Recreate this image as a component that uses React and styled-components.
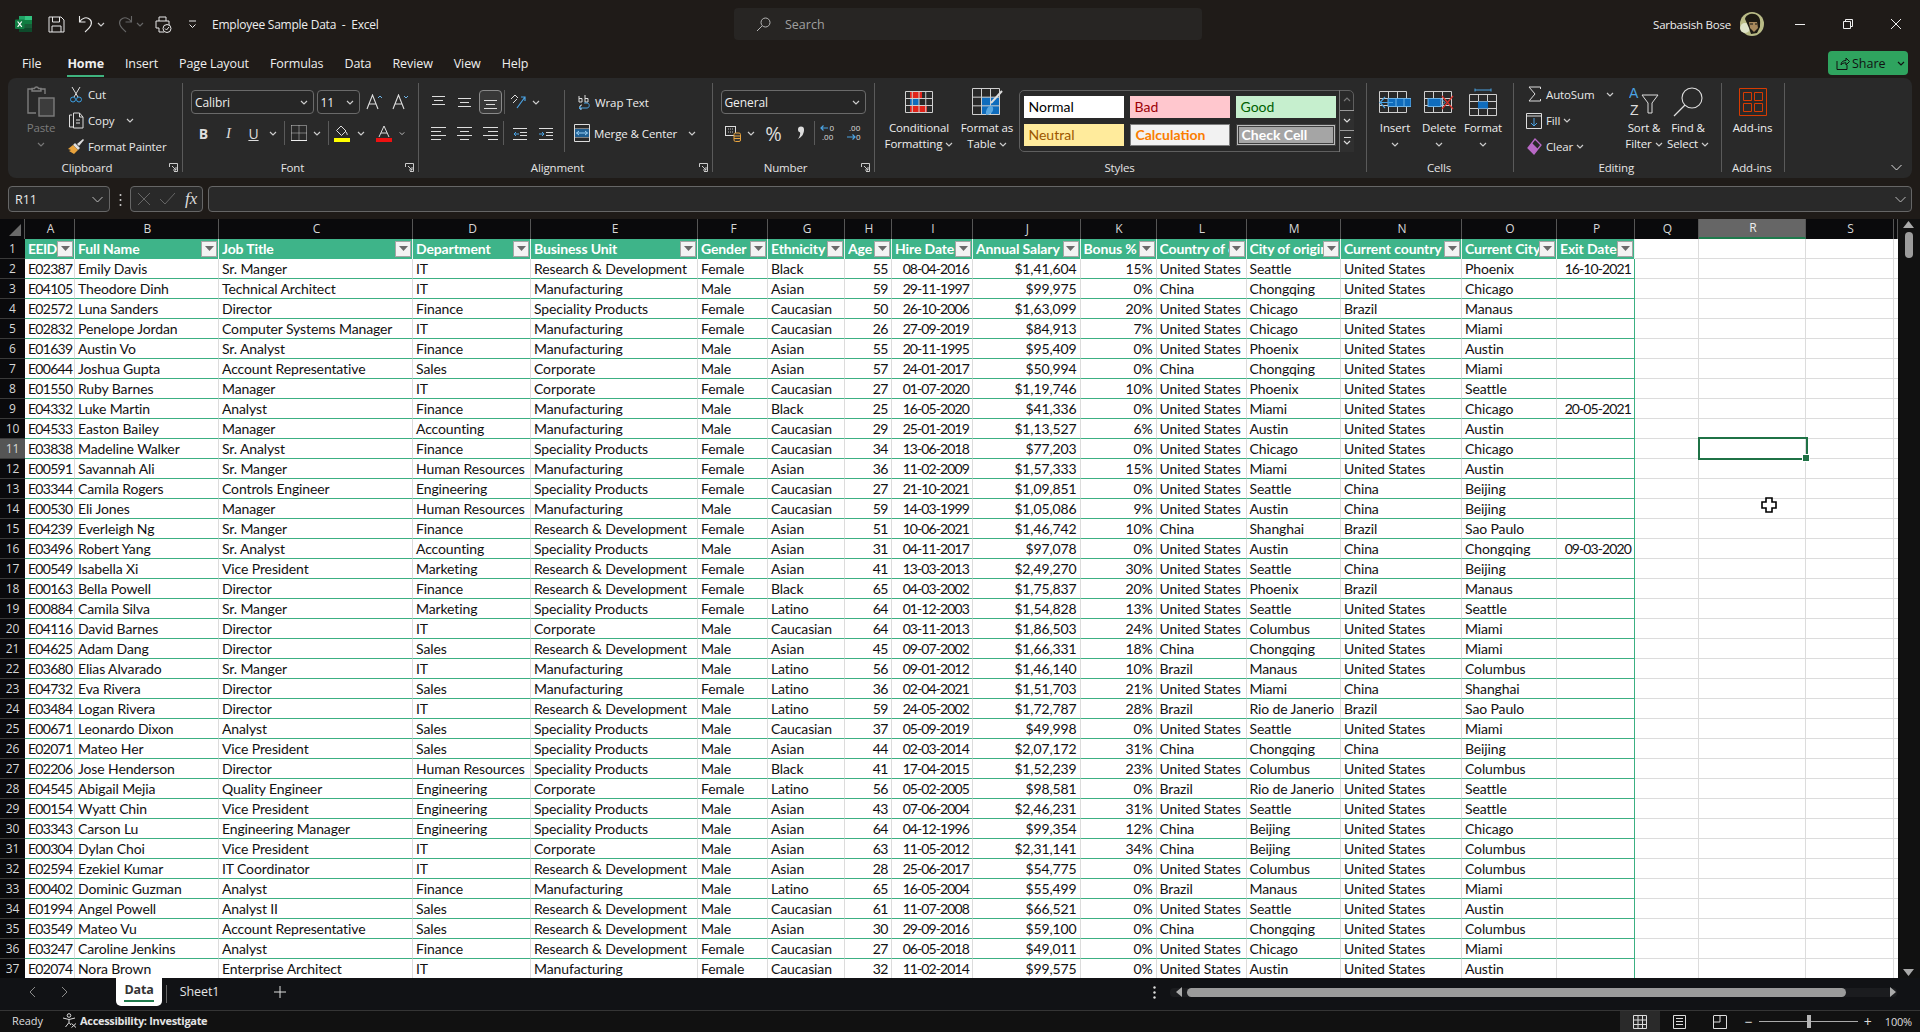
import React from "react";
import styled, { createGlobalStyle } from "styled-components";

const Global = createGlobalStyle`
  html, body { margin: 0; padding: 0; background: #1f1b18; }
  * { box-sizing: border-box; }
  #root { width: 1920px; height: 1032px; overflow: hidden; }
`;

const UI = `"Open Sans", "Noto Sans", sans-serif`;
const CELL = `Lato, "Liberation Sans", sans-serif`;

const Page = styled.div`
  width: 1920px; height: 1032px; display: flex; flex-direction: column;
  background: #1f1b18; color: #e8e8e8; font-family: ${UI}; overflow: hidden;
`;

/* Title bar */
const TitleBar = styled.div`display: flex; align-items: center; height: 48px; padding-left: 15px; flex: none;`;
const Quick = styled.div`width: ${p => p.$w}px; display: flex; align-items: center; flex: none;`;
const TitleText = styled.div`width: 522px; flex: none; font-size: 12px; letter-spacing: -0.24px; white-space: pre; color: #eee;`;
const SearchBox = styled.div`
  width: 468px; height: 32px; flex: none; background: #272523; border-radius: 4px;
  display: flex; align-items: center; gap: 14px; padding-left: 22px; color: #a0a0a0; font-size: 12.5px;
`;
const TitleRight = styled.div`margin-left: auto; display: flex; align-items: center;`;
const UserName = styled.div`font-size: 11.5px; letter-spacing: -0.22px; color: #eee; margin-right: 9px;`;
const WinBtn = styled.div`width: 48px; height: 48px; display: flex; align-items: center; justify-content: center;`;
const AvatarWrap = styled.div`width: 24px; height: 24px; margin-right: 12px; display: flex;`;

/* Menu */
const MenuBar = styled.div`display: flex; align-items: center; height: 30px; padding: 0 12px 0 22px; gap: 21px; flex: none;`;
const MenuItem = styled.div`
  position: relative; top: 1px; font-size: 12.5px; color: #eee; font-weight: ${p => (p.$active ? 700 : 400)};
  letter-spacing: -0.1px; line-height: 24px; margin-right: ${p => p.$mr || 0}px;
  ${p => p.$active && `&::after { content:""; position:absolute; left:0; right:0; bottom:-1px; height:2px; background:#3fb37f; }`}
`;
const ShareBtn = styled.div`
  margin-left: auto; width: 80px; height: 24px; background: #2fa45f; border-radius: 4px;
  display: flex; align-items: center; padding-left: 8px; gap: 2px; font-size: 12.5px; color: #111;
`;

/* Ribbon */
const Ribbon = styled.div`
  flex: none; height: 100px; margin: 0 8px; background: #292929; border-radius: 8px;
  display: flex; align-items: flex-start; padding-top: 5px;
`;
const Group = styled.div`
  width: ${p => p.$w}px; height: 89px; flex: none; display: flex; flex-direction: column;
  border-right: 1px solid #5a5a5a;
`;
const Body = styled.div`flex: 1; min-height: 0; display: flex; padding-left: ${p => p.$pl || 0}px; padding-top: ${p => p.$pt || 0}px;`;
const Foot = styled.div`height: 12px; display: flex; align-items: center; padding-right: 2px; margin-bottom: 0;`;
const GroupLabel = styled.div`flex: 1; text-align: center; font-size: 11.5px; letter-spacing: -0.15px; line-height: 16px; height: 16px; position: relative; top: 2px; color: #e4e4e4;`;
const Launcher = styled.div`width: 14px; height: 16px; display: flex; align-items: center; justify-content: center; position: relative; top: 1px;`;
const Stack = styled.div`display: flex; flex-direction: column; width: ${p => (p.$w ? p.$w + "px" : "auto")}; flex: none; margin-top: ${p => p.$mt || 0}px;`;
const SmallRow = styled.div`display: flex; align-items: center; height: 26px; font-size: 11.5px; letter-spacing: -0.12px; white-space: nowrap; padding-left: ${p => p.$pl || 0}px;`;
const IconSlot = styled.div`width: ${p => p.$w}px; margin-right: ${p => p.$mr || 0}px; flex: none; display: flex; justify-content: center; align-items: center;`;
const ChevSlot = styled.div`margin-left: ${p => p.$ml || 5}px; display: flex;`;
const LargeBtn = styled.div`width: ${p => p.$w}px; flex: none; display: flex; flex-direction: column; align-items: center; font-size: 11.5px; letter-spacing: -0.12px; color: ${p => p.$dim ? "#7c7c7c" : "#eee"};`;
const LargeIcon = styled.div`height: 37px; display: flex; align-items: center; justify-content: center;`;
const LargeLine = styled.div`height: 16px; line-height: 16px; display: flex; align-items: center; gap: 3px; white-space: nowrap;`;
const ToolRows = styled.div`display: flex; flex-direction: column; gap: 7px; flex: none;`;
const ToolRow = styled.div`display: flex; align-items: center; height: 24px;`;
const Select = styled.div`
  width: ${p => p.$w}px; height: 24px; flex: none; border: 1px solid #6a6a6a; border-radius: 4px;
  background: #262626; display: flex; align-items: center; justify-content: space-between;
  padding: 0 5px 0 3px; font-size: 12px; letter-spacing: -0.1px; color: #eee; margin-left: ${p => p.$ml || 0}px;
`;
const Tool = styled.div`
  width: ${p => p.$w}px; height: 24px; flex: none; display: flex; align-items: center; justify-content: center;
  margin-left: ${p => p.$ml || 0}px; border-radius: 4px; color: #ddd;
  font-size: ${p => p.$fs || 13}px; font-family: ${p => p.$serif ? `"Liberation Serif", serif` : "inherit"};
  font-weight: ${p => p.$bold ? 700 : 400}; font-style: ${p => p.$it ? "italic" : "normal"};
  text-decoration: ${p => p.$under ? "underline" : "none"};
  ${p => p.$sel && `border: 1px solid #8a8a8a; background: #383838;`}
`;
const RowSep = styled.div`width: 1px; height: 24px; background: #5a5a5a; flex: none; margin: 0 ${p => p.$mr || 0}px 0 ${p => p.$ml || 0}px;`;
const TallSep = styled.div`width: 1px; height: 62px; background: #5a5a5a; flex: none; margin-left: ${p => p.$ml || 0}px;`;
const TextTool = styled.div`display: flex; align-items: center; height: 24px; padding-left: ${p => p.$pl}px; font-size: 11.5px; letter-spacing: -0.1px; white-space: nowrap; color: #eee;`;
const StylesSlot = styled.div`padding-top: 7px;`;

const Gallery = styled.div`
  width: 335px; height: 62px; flex: none; border: 1px solid #5f5f5f; border-radius: 5px;
  display: flex; padding: 5px 0 0 3.5px; position: relative;
`;
const StyleGrid = styled.div`display: grid; grid-template-columns: repeat(3, 100px); grid-auto-rows: 22px; gap: 6px; flex: none;`;
const StyleCell = styled.div`
  display: flex; align-items: center; padding: 0 0 2px 5px; font-family: ${CELL}; font-size: 14px;
  background: ${p => p.$bg}; color: ${p => p.$fg}; font-weight: ${p => p.$bold ? 700 : 400};
  ${p => p.$focus && `outline: 3px solid #292929; box-shadow: 0 0 0 3px #929292;`}
  ${p => p.$box && `border: 1px solid #7f7f7f;`}
  ${p => p.$double && `border: 1px solid #3f3f3f; box-shadow: inset 0 0 0 1px #bbb, inset 0 0 0 2px #3f3f3f;`}
`;
const GalleryScroll = styled.div`
  width: 15px; flex: none; margin: -6px -1px -1px auto; display: flex; flex-direction: column;
  border-left: 1px solid #777;
`;
const GalleryBtn = styled.div`
  flex: 1; display: flex; flex-direction: column; gap: 2px; align-items: center; justify-content: center;
  border-bottom: 1px solid ${p => p.$last ? "transparent" : "#9a9a9a"}; background: ${p => p.$bright ? "#2f2f2f" : "transparent"};
`;
const GalleryBar = styled.div`width: 7px; height: 1px; background: #ddd;`;
const Collapse = styled.div`margin-left: auto; align-self: flex-end; padding: 0 10px 7px 0; display: flex;`;

/* Formula bar */
const FormulaBar = styled.div`flex: none; height: 26px; margin: 8px 8px 0; display: flex; align-items: stretch;`;
const NameBox = styled.div`
  width: 102px; flex: none; background: #292929; border: 1px solid #666; border-radius: 4px;
  display: flex; align-items: center; justify-content: space-between; padding: 0 6px 0 6px; font-size: 12.5px;
`;
const Dots = styled.div`width: 20px; flex: none; display: flex; align-items: center; justify-content: center;`;
const FxBox = styled.div`
  width: 73px; flex: none; background: #292929; border: 1px solid #666; border-radius: 4px;
  display: flex; align-items: center; gap: 10px; padding: 0 0 0 7px; color: #cfcfcf;
`;
const FxText = styled.span`font-family: "Liberation Serif", serif; font-style: italic; font-size: 17px; color: #ddd;`;
const FormulaInput = styled.div`
  flex: 1; margin-left: 5px; background: #292929; border: 1px solid #666; border-radius: 4px;
  display: flex; align-items: center; justify-content: flex-end; padding-right: 5px;
`;

/* Sheet */
const SheetArea = styled.div`flex: none; height: 759px; margin-top: 7px; display: flex; background: #0c0c0e;`;
const GridWrap = styled.div`width: 1898px; flex: none; position: relative; overflow: hidden;`;
const COLS = "25px 50px 144px 194px 118px 167px 70px 77px 47px 81px 107.5px 76px 90px 94.5px 121px 95px 78px 64px 107px 88px 4px";
const ColHeadRow = styled.div`display: grid; grid-template-columns: ${COLS}; height: 20px; background: #0a0a0c;`;
const Corner = styled.div`display: flex; align-items: flex-end; justify-content: flex-end; padding: 0 3px 3px 0; border-right: 1px solid #555;`;
const ColHead = styled.div`
  display: flex; align-items: center; justify-content: center; font-size: 12px; color: #d8d8d8; padding: 0 0 1px 2px;
  border-right: 1px solid #555; ${p => p.$sel && `background: #666; color: #eee; border-bottom: 2px solid #1f7a4c;`}
`;
const Row = styled.div`display: grid; grid-template-columns: ${COLS}; height: 20px; background: #fff;`;
const RowHead = styled.div`
  display: flex; align-items: center; justify-content: center; font-size: 12px; background: ${p => p.$sel ? "#555" : "#0a0a0c"};
  color: #d8d8d8; border-bottom: 1px solid #3a3a3a;
`;
const Cell = styled.div`
  font-family: ${CELL}; font-size: 14px; letter-spacing: ${p => p.$ls || -0.12}px; color: #111; line-height: 19px;
  padding: 0 3px; overflow: hidden; white-space: nowrap; text-align: ${p => p.$right ? "right" : "left"};
  border-right: 1px solid ${p => p.$edge ? "#3cb083" : "#dcdcdc"};
  border-bottom: 1px solid ${p => p.$table ? "#3cb083" : "#dcdcdc"};
`;
const HeadCell = styled.div`
  display: flex; align-items: center; background: #3eb489; color: #fff; font-family: ${CELL}; font-weight: 700;
  font-size: 14px; letter-spacing: ${p => p.$ls || -0.12}px; padding: 0 1px 1px 3px; overflow: hidden; border-right: 1px solid #e8f5ef;
`;
const HeadText = styled.div`flex: 1; min-width: 0; overflow: hidden; white-space: nowrap; padding-bottom: 1px;`;
const Filter = styled.div`
  width: 16px; height: 16px; flex: none; background: #f3f3f3; border: 1px solid #a5a5a5;
  display: flex; align-items: center; justify-content: center;
`;
const Selection = styled.div`
  position: absolute; left: 1698px; top: 218px; width: 110px; height: 23px; pointer-events: none;
  border: 2px solid #1f7246;
  &::after { content: ""; position: absolute; right: -4px; bottom: -4px; width: 6px; height: 6px; background: #1f7246; border: 1px solid #fff; }
`;
const CursorMark = styled.div`position: absolute; left: 1761px; top: 278px; display: flex;`;

const VScroll = styled.div`flex: 1; background: #111; display: flex; flex-direction: column; align-items: center; padding: 2px 1px 2px 0;`;
const VThumb = styled.div`width: 8px; height: 26px; margin-top: 4px; border-radius: 4px; background: #9c9c9c;`;
const VSpacer = styled.div`flex: 1;`;

/* Tabs */
const TabsBar = styled.div`flex: none; height: 32px; background: #111215; display: flex; align-items: flex-start; position: relative;`;
const Nav = styled.div`
  width: ${p => p.$w}px; flex: none; height: 28px; display: flex; align-items: center;
  justify-content: ${p => p.$start ? "flex-start" : "center"}; padding-left: ${p => p.$pl || 0}px;
`;
const ActiveTab = styled.div`
  width: 46px; height: 28px; flex: none; background: #fff; color: #333; font-family: ${UI}; font-weight: 700; font-size: 12.5px; letter-spacing: -0.2px;
  border-radius: 0 0 5px 5px; text-align: center; line-height: 24px; position: relative;
  &::after { content: ""; position: absolute; left: 8px; right: 8px; bottom: 4px; height: 2px; background: #1f7a4c; }
`;
const TabSep = styled.div`width: 1px; height: 18px; background: #666; flex: none; margin: 7px 0 0 ${p => p.$ml}px;`;
const SheetTab = styled.div`width: 65px; flex: none; height: 28px; line-height: 28px; text-align: center; font-size: 12.5px; letter-spacing: -0.1px; color: #e4e4e4;`;
const HScrollZone = styled.div`margin-left: auto; display: flex; align-items: center; height: 28px; padding-right: 23px;`;
const HTrack = styled.div`width: 727px; height: 9px; margin-left: 14px; background: #1b1c1f; border-radius: 4px; display: flex; align-items: center; justify-content: space-between; position: relative; padding: 0 1px 0 6px;`;
const HThumb = styled.div`width: 659px; height: 9px; border-radius: 5px; background: #9b9b9b; margin-left: 5px;`;
const HGrow = styled.div`flex: 1;`;

/* Status */
const StatusBar = styled.div`flex: none; height: 22px; background: #111; border-top: 1px solid #353535; display: flex; align-items: center; padding: 0 0 0 12px; font-size: 11px; color: #ddd;`;
const ReadyText = styled.div`width: 50px; flex: none; letter-spacing: -0.1px; padding-bottom: 2px;`;
const A11y = styled.div`display: flex; align-items: center; gap: 3px; font-weight: 700; letter-spacing: -0.3px; color: #e4e4e4; padding-bottom: 2px;`;
const StatusRight = styled.div`margin-left: auto; display: flex; align-items: center; height: 100%; padding-right: 8px;`;
const ViewBtn = styled.div`width: ${p => p.$w}px; height: 100%; flex: none; display: flex; align-items: center; justify-content: center; margin-right: ${p => p.$mr || 0}px; background: ${p => p.$on ? "#2a2a2a" : "transparent"};`;
const Slider = styled.div`width: 99px; height: 1px; background: #aaa; margin: 0 5px; position: relative; flex: none;`;
const SliderThumb = styled.div`position: absolute; left: 48px; top: -6px; width: 4px; height: 13px; background: #b5b5b5;`;
const ZoomSign = styled.div`width: 10px; text-align: center; font-size: 14px; color: #ddd;`;
const ZoomText = styled.div`margin-left: 12px; font-size: 11px; letter-spacing: -0.2px;`;

/* Icons */
const S = ({ w, h, children, ...r }) => <svg width={w} height={h} viewBox={`0 0 ${w} ${h}`} fill="none" stroke="#ddd" strokeWidth="1" {...r}>{children}</svg>;
const Chev = ({ c = "#ccc", up }) => <S w={8} h={5} stroke={c}><path d={up ? "M1 4l3-3 3 3" : "M1 1l3 3 3-3"} strokeWidth="1.2" /></S>;
const Launch = () => <S w={9} h={9} stroke="#ccc"><path d="M.5 4V.5H8.5V8.5H5M3 3l4 4M7 4v3H4" /></S>;
const ExcelLogo = () => (
  <svg width="17" height="16" viewBox="0 0 17 16">
    <rect x="4" width="13" height="4" fill="#21a366" /><rect x="4" y="4" width="13" height="4" fill="#107c41" />
    <rect x="4" y="8" width="13" height="4" fill="#185c37" /><rect x="4" y="12" width="13" height="4" fill="#0e4a2b" />
    <rect x="10" width="7" height="4" fill="#33c481" /><rect x="0" y="3.5" width="9.5" height="9.5" rx="1" fill="#107c41" />
    <path d="M2.6 5.5l4.2 5.4M6.8 5.5l-4.2 5.4" stroke="#fff" strokeWidth="1.2" />
  </svg>
);
const SaveIcon = () => <S w={17} h={17} stroke="#e8e8e8"><path d="M1 1h12l3 3v12H1zM4.5 1v5h7V1M4 16v-6h9v6" /></S>;
const UndoIcon = ({ c = "#e8e8e8" }) => <S w={16} h={18} stroke={c}><path d="M1.5 1v6h6M1.5 7C4 2.5 9 1.5 12 4.5c3 3 1.5 7-5 12.5" strokeWidth="1.1" /></S>;
const RedoIcon = ({ c = "#666" }) => <S w={16} h={18} stroke={c}><path d="M14.5 1v6h-6M14.5 7C12 2.5 7 1.5 4 4.5c-3 3-1.5 7 5 12.5" strokeWidth="1.1" /></S>;
const PrintIcon = () => <S w={17} h={17} stroke="#e8e8e8"><path d="M4 5V1h7v4M1 5h13v7H10M1 5v7h3M4 12v4h5" /><circle cx="12" cy="12.5" r="4" fill="#1f1b18" /><path d="M10 12.5l1.5 1.5 2.5-3" /></S>;
const CustomizeIcon = () => <S w={9} h={9} stroke="#e8e8e8"><path d="M1 1h7M1.5 4.5L4.5 7.5l3-3" /></S>;
const SearchIcon = () => <S w={15} h={15} stroke="#b5b5b5"><circle cx="9.5" cy="5.5" r="4.5" /><path d="M6 9l-5 5" /></S>;
const Avatar = () => (
  <svg width="24" height="24" viewBox="0 0 24 24">
    <circle cx="12" cy="12" r="12" fill="#b9bb86" /><circle cx="5" cy="16" r="5" fill="#dfe4c9" />
    <path d="M5 7c1-5 9-7 13-3 3 3 2 7 2 11l-3 6-6 1-2-6z" fill="#1d1a12" />
    <path d="M9 10l8 0 1 6-4 4-4-4z" fill="#a8895c" /><path d="M10 12h3M15 12h2" stroke="#111" />
  </svg>
);
const MinIcon = () => <S w={10} h={10} stroke="#eee"><path d="M0 5.5h10" /></S>;
const RestoreIcon = () => <S w={10} h={10} stroke="#eee"><path d="M.5 2.5h7v7h-7zM2.5 2.5V.5h7v7h-2" /></S>;
const CloseIcon = () => <S w={10} h={10} stroke="#eee"><path d="M0 0l10 10M10 0L0 10" /></S>;
const ShareIcon = () => <S w={14} h={14} stroke="#111"><path d="M1 5v8.5h10V9M5 9c0-3 2-4.5 5-4.5V2l3.5 3.5L10 9V6.8C7.5 6.8 6 7.5 5 9z" /></S>;
const PasteIcon = () => (
  <S w={28} h={31} stroke="#7d7d7d"><path d="M6 3H1v24h8M13 3h5v5M5 5V2.5h2.5C8 .5 11 .5 11.5 2.5H14V5z" strokeWidth="1.4" /><rect x="12" y="12" width="15" height="18" fill="#3c3c3c" strokeWidth="1.4" /></S>
);
const CutIcon = () => <S w={12} h={17} stroke="#ddd"><path d="M2 1l6 10M10 1L4 11" /><circle cx="3" cy="13.5" r="2.5" stroke="#3b9fe3" /><circle cx="9" cy="13.5" r="2.5" stroke="#3b9fe3" /></S>;
const CopyIcon = () => <S w={15} h={17} stroke="#ddd"><path d="M3 3H.5v12H4M4.5 1h6l3.5 4v11H4.5zM10.5 1v4H14M7 8h4M7 11h4" /></S>;
const PainterIcon = () => (
  <svg width="17" height="17" viewBox="0 0 17 17" fill="none"><path d="M9 6l2 2 5-6-1-1z" fill="#ddd" /><path d="M7 5l5 5-2 2-5-5z" fill="#ddd" /><path d="M5 7l5 5-4 4-5-3 2-1-3-1z" fill="#e8a33d" /></svg>
);
const GrowFont = ({ up }) => (
  <S w={17} h={16} stroke="#ddd"><path d="M1 15L6.5 1 12 15M3 10h7" strokeWidth="1.1" /><path d={up ? "M12 4l2-2 2 2" : "M12 2l2 2 2-2"} stroke="#6cb2e6" /></S>
);
const BorderIcon = () => (
  <S w={16} h={16} stroke="#ccc" strokeDasharray="1 1"><path d="M.5.5h15v15M.5.5v15M8 .5v15M.5 8h15" /><path d="M0 15.5h16" stroke="#eee" strokeDasharray="none" /></S>
);
const FillIcon = () => (
  <svg width="16" height="17" viewBox="0 0 16 17" fill="none"><path d="M7 1l5 5-4.5 4.5-5-5zM12 7c1 1.5 1.5 2.5 1 3" stroke="#ddd" /><rect y="13" width="16" height="4" fill="#ffff00" /></svg>
);
const FontColorIcon = () => (
  <svg width="16" height="17" viewBox="0 0 16 17" fill="none"><path d="M3 12L8 1l5 11M5 8h6" stroke="#ddd" /><rect y="13" width="16" height="4" fill="#ee1111" /></svg>
);
/* horizontal-alignment and vertical-alignment glyphs: rows of [x1, x2, y] lines */
const Lines = ({ pattern }) => (
  <S w={15} h={14} stroke="#ddd">{pattern.map(([a, b, y], i) => <path key={i} d={`M${a} ${y + .5}H${b}`} />)}</S>
);
const V_TOP = [[1,14,1],[3,12,5],[1,14,9]];
const V_MID = [[1,14,3],[3,12,7],[1,14,11]];
const V_BOT = [[1,14,5],[3,12,9],[1,14,13]];
const H_LEFT = [[0,15,1],[0,10,5],[0,15,9],[0,10,13]];
const H_CENTER = [[0,15,1],[3,12,5],[0,15,9],[3,12,13]];
const H_RIGHT = [[0,15,1],[5,15,5],[0,15,9],[5,15,13]];
const OrientIcon = () => <S w={17} h={16} stroke="#ddd"><path d="M1 5l4-4 3 3M3 9l4-4" /><path d="M7 14L15 3M11 3h4v4" stroke="#4ba3e3" strokeWidth="1.2" /></S>;
const IndentIcon = ({ right }) => (
  <S w={15} h={13} stroke="#ddd"><path d="M1 1.5h14M8 5.5h7M8 8.5h7M1 12.5h14" />{right ? <path d="M1 7h5M4 5l2 2-2 2" stroke="#4ba3e3" /> : <path d="M7 7H2M4 5L2 7l2 2" stroke="#4ba3e3" />}</S>
);
const WrapIcon = () => (
  <S w={15} h={17} stroke="#ddd"><path d="M2 8V2M2 4.5h3V8H2M8 1v7M8 4.5h3V8H8M5 15c-3 0-3-4 0-4" /><path d="M2 14h8c3 0 3-5 0-5H7M4 12l-2 2 2 2" stroke="#4ba3e3" /></S>
);
const MergeIcon = () => (
  <S w={16} h={18} stroke="#ddd"><path d="M.5.5h15v17H.5zM.5 5h15M.5 13h15" /><rect x="1" y="5" width="14" height="8" fill="#1f5e91" stroke="none" /><path d="M2.5 9h11M5 7L2.5 9 5 11M11 7l2.5 2-2.5 2" stroke="#9bd0f5" /></S>
);
const AcctIcon = () => (
  <svg width="16" height="17" viewBox="0 0 16 17" fill="none"><rect x=".5" y="1.5" width="10" height="9" stroke="#ddd" /><path d="M3 4h5M3 7h5" stroke="#bbb" strokeDasharray="1 1" /><rect x="9" y="8" width="6.5" height="8.5" rx="1.5" fill="#333" stroke="#e7a33e" /><path d="M9 11h6.5M9 13.5h6.5" stroke="#e7a33e" /></svg>
);
const CommaIcon = () => (
  <svg width="9" height="14" viewBox="0 0 9 14"><circle cx="5" cy="3.5" r="3" fill="#ddd" /><path d="M8 3.5C8 8 6 11 2 13c2-3 2.5-5 2-7z" fill="#ddd" /></svg>
);
const DecIcon = ({ inc }) => (
  <svg width="16" height="20" viewBox="0 0 16 20" fill="none">
    {inc ? <path d="M8 5H1M3.5 2.5L1 5l2.5 2.5" stroke="#4ba3e3" strokeWidth="1.2" /> : <path d="M1 14h8M6.5 11.5L9 14l-2.5 2.5" stroke="#4ba3e3" strokeWidth="1.2" />}
    <text x={inc ? 9.5 : 3} y={8} fontSize="8" fill="#ddd" fontFamily="Open Sans">{inc ? "0" : ".00"}</text>
    <text x={inc ? 2 : 10} y={17} fontSize="8" fill="#ddd" fontFamily="Open Sans">{inc ? ".00" : "0"}</text>
  </svg>
);
const GridLines = ({ x, y, w, h, cols, rows }) => {
  const out = [];
  for (let i = 0; i <= cols; i++) out.push(<path key={"c" + i} d={`M${x + (w * i) / cols} ${y}v${h}`} />);
  for (let i = 0; i <= rows; i++) out.push(<path key={"r" + i} d={`M${x} ${y + (h * i) / rows}h${w}`} />);
  return <g stroke="#cfcfcf" fill="none">{out}</g>;
};
const CondIcon = () => (
  <svg width="28" height="22" viewBox="0 0 28 22"><rect x="5" y="0" width="12" height="7" fill="#e2231a" /><rect x="5" y="7" width="9" height="7" fill="#0f6cbd" /><rect x="5" y="14" width="17" height="8" fill="#e2231a" /><GridLines x={.5} y={.5} w={27} h={21} cols={4} rows={3} /></svg>
);
const TableIcon = () => (
  <svg width="31" height="28" viewBox="0 0 31 28" fill="none"><rect x="10" y="9" width="18" height="18" fill="#0f6cbd" /><GridLines x={.5} y={.5} w={27} h={26} cols={3} rows={3} /><path d="M30 3L19 15" stroke="#ddd" strokeWidth="2" /><path d="M14 27c-1-6 4-11 6-9 3 3 0 9-6 9z" fill="#5aa7e0" /></svg>
);
const InsertIcon = () => (
  <svg width="32" height="22" viewBox="0 0 32 22" fill="none"><GridLines x={.5} y={.5} w={27} h={21} cols={3} rows={3} /><rect x="9" y="7.5" width="23" height="8" fill="#0f6cbd" stroke="#6cb2e6" /><path d="M17 7.5v8M25 7.5v8" stroke="#6cb2e6" /><path d="M14 11.5H1M6 6l-5 5.5L6 17" stroke="#4ba3e3" strokeWidth="1.2" /></svg>
);
const DeleteIcon = () => (
  <svg width="30" height="22" viewBox="0 0 30 22" fill="none"><GridLines x={.5} y={.5} w={27} h={21} cols={3} rows={3} /><rect x="4" y="7.5" width="13" height="8" fill="#0f6cbd" stroke="#6cb2e6" /><path d="M17 7.5l4 4-4 4" stroke="#6cb2e6" /><path d="M18 5l11 13M29 5L18 18" stroke="#d9312b" strokeWidth="1.2" /></svg>
);
const FormatIcon = () => (
  <svg width="28" height="28" viewBox="0 0 28 28" fill="none"><path d="M6 2h16M6 .5v3M22 .5v3" stroke="#4ba3e3" /><GridLines x={.5} y={6.5} w={27} h={21} cols={3} rows={3} /><rect x="9" y="13.5" width="10" height="7" fill="#0f6cbd" /></svg>
);
const SumIcon = () => <S w={13} h={16} stroke="#ddd"><path d="M12.5 3V1H1l6 7-6 7h11.5v-2" /></S>;
const FillDownIcon = () => <S w={16} h={17} stroke="#ddd"><path d="M.5 1.5h15v15H.5zM.5 4h15" /><path d="M8 6v8M5 11l3 3 3-3" stroke="#4ba3e3" /></S>;
const EraserIcon = () => <svg width="15" height="17" viewBox="0 0 15 17" fill="none"><path d="M8 1l6 6-7 9-6-6z" stroke="#b969c6" strokeWidth="1.3" /><path d="M1 10l4-5 6 6-4 5z" fill="#b969c6" /></svg>;
const SortIcon = () => (
  <svg width="30" height="33" viewBox="0 0 30 33" fill="none">
    <text x="0" y="13" fontSize="14" fill="#4ba3e3" fontFamily="Liberation Sans">A</text>
    <text x="1" y="30" fontSize="14" fill="#ddd" fontFamily="Liberation Sans">Z</text>
    <path d="M13 10h16l-6 8v10h-4V18z" stroke="#ddd" />
  </svg>
);
const FindIcon = () => <S w={30} h={30} stroke="#ddd"><circle cx="19" cy="11" r="10" strokeWidth="1.1" /><path d="M12 18L1 29" strokeWidth="1.3" /></S>;
const AddinsIcon = () => <S w={28} h={28} stroke="#d83b01"><path d="M.5.5h27v27H.5z" /><path d="M4.5 4.5h8v8h-8zM15.5 4.5h8v8h-8zM4.5 15.5h8v8h-8zM15.5 15.5h8v8h-8z" /></S>;
const Arrow = ({ up, c = "#aaa" }) => <S w={11} h={7} stroke="none"><path d={up ? "M0 7L5.5 0 11 7z" : "M0 0L5.5 7 11 0z"} fill={c} /></S>;
const TriSide = ({ left, c = "#aaa" }) => <S w={6} h={10} stroke="none"><path d={left ? "M6 0L0 5l6 5z" : "M0 0l6 5-6 5z"} fill={c} /></S>;
const NavArrow = ({ left }) => <S w={7} h={12} stroke="#8a8a8a"><path d={left ? "M6 1L1 6l5 5" : "M1 1l5 5-5 5"} /></S>;
const Plus = () => <S w={12} h={12} stroke="#ddd"><path d="M6 0v12M0 6h12" /></S>;
const VDots = () => <S w={3} h={13} stroke="none"><circle cx="1.5" cy="1.5" r="1.2" fill="#ddd" /><circle cx="1.5" cy="6.5" r="1.2" fill="#ddd" /><circle cx="1.5" cy="11.5" r="1.2" fill="#ddd" /></S>;
const A11yIcon = () => <S w={15} h={15} stroke="#ddd"><circle cx="7" cy="2.5" r="1.8" /><path d="M1 5l6 1.5L13 5M7 6.5v3L3.5 14M7 9.5L9 12" /><path d="M9.5 10.5l4.5 4M14 10.5l-4.5 4" /></S>;
const NormalView = () => <S w={14} h={14} stroke="#ddd"><path d="M.5.5h13v13H.5zM.5 5h13M.5 9.5h13M5 .5v13M9.5.5v13" /></S>;
const PageView = () => <S w={13} h={14} stroke="#ddd"><path d="M.5.5h12v13H.5zM3 3.5h7M3 6.5h7M3 9.5h7" /></S>;
const BreakView = () => <S w={14} h={14} stroke="#ddd"><path d="M.5 1v12.5h13V1M7 1v6H.5M.5.5h13" /></S>;
const FilterTri = () => <S w={9} h={5} stroke="none"><path d="M0 0h9L4.5 5z" fill="#6a6a6a" /></S>;
const CrossCursor = () => (
  <svg width="16" height="16" viewBox="0 0 16 16"><path d="M5 1h6v4h4v6h-4v4H5v-4H1V5h4z" fill="#fff" stroke="#000" strokeWidth="1.6" /></svg>
);
const BigChev = ({ c = "#bbb" }) => <S w={11} h={7} stroke={c}><path d="M.5 1l5 5 5-5" /></S>;

/* Data */
const US = "United States";
const RD = "Research & Development", MF = "Manufacturing", SP = "Speciality Products", CO = "Corporate";
const rows = [
  ["E02387","Emily Davis","Sr. Manger","IT",RD,"Female","Black","55","08-04-2016","$1,41,604","15%",US,"Seattle",US,"Phoenix","16-10-2021"],
  ["E04105","Theodore Dinh","Technical Architect","IT",MF,"Male","Asian","59","29-11-1997","$99,975","0%","China","Chongqing",US,"Chicago",""],
  ["E02572","Luna Sanders","Director","Finance",SP,"Female","Caucasian","50","26-10-2006","$1,63,099","20%",US,"Chicago","Brazil","Manaus",""],
  ["E02832","Penelope Jordan","Computer Systems Manager","IT",MF,"Female","Caucasian","26","27-09-2019","$84,913","7%",US,"Chicago",US,"Miami",""],
  ["E01639","Austin Vo","Sr. Analyst","Finance",MF,"Male","Asian","55","20-11-1995","$95,409","0%",US,"Phoenix",US,"Austin",""],
  ["E00644","Joshua Gupta","Account Representative","Sales",CO,"Male","Asian","57","24-01-2017","$50,994","0%","China","Chongqing",US,"Miami",""],
  ["E01550","Ruby Barnes","Manager","IT",CO,"Female","Caucasian","27","01-07-2020","$1,19,746","10%",US,"Phoenix",US,"Seattle",""],
  ["E04332","Luke Martin","Analyst","Finance",MF,"Male","Black","25","16-05-2020","$41,336","0%",US,"Miami",US,"Chicago","20-05-2021"],
  ["E04533","Easton Bailey","Manager","Accounting",MF,"Male","Caucasian","29","25-01-2019","$1,13,527","6%",US,"Austin",US,"Austin",""],
  ["E03838","Madeline Walker","Sr. Analyst","Finance",SP,"Female","Caucasian","34","13-06-2018","$77,203","0%",US,"Chicago",US,"Chicago",""],
  ["E00591","Savannah Ali","Sr. Manger","Human Resources",MF,"Female","Asian","36","11-02-2009","$1,57,333","15%",US,"Miami",US,"Austin",""],
  ["E03344","Camila Rogers","Controls Engineer","Engineering",SP,"Female","Caucasian","27","21-10-2021","$1,09,851","0%",US,"Seattle","China","Beijing",""],
  ["E00530","Eli Jones","Manager","Human Resources",MF,"Male","Caucasian","59","14-03-1999","$1,05,086","9%",US,"Austin","China","Beijing",""],
  ["E04239","Everleigh Ng","Sr. Manger","Finance",RD,"Female","Asian","51","10-06-2021","$1,46,742","10%","China","Shanghai","Brazil","Sao Paulo",""],
  ["E03496","Robert Yang","Sr. Analyst","Accounting",SP,"Male","Asian","31","04-11-2017","$97,078","0%",US,"Austin","China","Chongqing","09-03-2020"],
  ["E00549","Isabella Xi","Vice President","Marketing",RD,"Female","Asian","41","13-03-2013","$2,49,270","30%",US,"Seattle","China","Beijing",""],
  ["E00163","Bella Powell","Director","Finance",RD,"Female","Black","65","04-03-2002","$1,75,837","20%",US,"Phoenix","Brazil","Manaus",""],
  ["E00884","Camila Silva","Sr. Manger","Marketing",SP,"Female","Latino","64","01-12-2003","$1,54,828","13%",US,"Seattle",US,"Seattle",""],
  ["E04116","David Barnes","Director","IT",CO,"Male","Caucasian","64","03-11-2013","$1,86,503","24%",US,"Columbus",US,"Miami",""],
  ["E04625","Adam Dang","Director","Sales",RD,"Male","Asian","45","09-07-2002","$1,66,331","18%","China","Chongqing",US,"Miami",""],
  ["E03680","Elias Alvarado","Sr. Manger","IT",MF,"Male","Latino","56","09-01-2012","$1,46,140","10%","Brazil","Manaus",US,"Columbus",""],
  ["E04732","Eva Rivera","Director","Sales",MF,"Female","Latino","36","02-04-2021","$1,51,703","21%",US,"Miami","China","Shanghai",""],
  ["E03484","Logan Rivera","Director","IT",RD,"Male","Latino","59","24-05-2002","$1,72,787","28%","Brazil","Rio de Janerio","Brazil","Sao Paulo",""],
  ["E00671","Leonardo Dixon","Analyst","Sales",SP,"Male","Caucasian","37","05-09-2019","$49,998","0%",US,"Seattle",US,"Miami",""],
  ["E02071","Mateo Her","Vice President","Sales",SP,"Male","Asian","44","02-03-2014","$2,07,172","31%","China","Chongqing","China","Beijing",""],
  ["E02206","Jose Henderson","Director","Human Resources",SP,"Male","Black","41","17-04-2015","$1,52,239","23%",US,"Columbus",US,"Columbus",""],
  ["E04545","Abigail Mejia","Quality Engineer","Engineering",CO,"Female","Latino","56","05-02-2005","$98,581","0%","Brazil","Rio de Janerio",US,"Seattle",""],
  ["E00154","Wyatt Chin","Vice President","Engineering",SP,"Male","Asian","43","07-06-2004","$2,46,231","31%",US,"Seattle",US,"Seattle",""],
  ["E03343","Carson Lu","Engineering Manager","Engineering",SP,"Male","Asian","64","04-12-1996","$99,354","12%","China","Beijing",US,"Chicago",""],
  ["E00304","Dylan Choi","Vice President","IT",CO,"Male","Asian","63","11-05-2012","$2,31,141","34%","China","Beijing",US,"Columbus",""],
  ["E02594","Ezekiel Kumar","IT Coordinator","IT",RD,"Male","Asian","28","25-06-2017","$54,775","0%",US,"Columbus",US,"Columbus",""],
  ["E00402","Dominic Guzman","Analyst","Finance",MF,"Male","Latino","65","16-05-2004","$55,499","0%","Brazil","Manaus",US,"Miami",""],
  ["E01994","Angel Powell","Analyst II","Sales",RD,"Male","Caucasian","61","11-07-2008","$66,521","0%",US,"Seattle",US,"Austin",""],
  ["E03549","Mateo Vu","Account Representative","Sales",RD,"Male","Asian","30","29-09-2016","$59,100","0%","China","Chongqing",US,"Columbus",""],
  ["E03247","Caroline Jenkins","Analyst","Finance",RD,"Female","Caucasian","27","06-05-2018","$49,011","0%",US,"Chicago",US,"Miami",""],
  ["E02074","Nora Brown","Enterprise Architect","IT",MF,"Female","Caucasian","32","11-02-2014","$99,575","0%",US,"Austin",US,"Austin",""],
];
const letters = "ABCDEFGHIJKLMNOPQRS".split("");
const headers = ["EEID","Full Name","Job Title","Department","Business Unit","Gender","Ethnicity","Age","Hire Date","Annual Salary","Bonus %","Country of origin","City of origin","Current country","Current City","Exit Date"];
const RIGHT = new Set([7, 8, 9, 10, 15]);
const TIGHT = { 0: -0.72, 7: -0.5, 8: -0.9, 15: -0.9 };

const Foots = ({ label, launch }) => (
  <Foot>
    <GroupLabel>{label}</GroupLabel>
    {launch && <Launcher><Launch /></Launcher>}
  </Foot>
);

export default function App() {
  return (
    <Page>
      <Global />
      <TitleBar>
        <Quick $w={33}><ExcelLogo /></Quick>
        <Quick $w={30}><SaveIcon /></Quick>
        <Quick $w={19}><UndoIcon /></Quick>
        <Quick $w={20}><Chev /></Quick>
        <Quick $w={19}><RedoIcon /></Quick>
        <Quick $w={19}><Chev c="#666" /></Quick>
        <Quick $w={33}><PrintIcon /></Quick>
        <Quick $w={24}><CustomizeIcon /></Quick>
        <TitleText>Employee Sample Data  -  Excel</TitleText>
        <SearchBox><SearchIcon />Search</SearchBox>
        <TitleRight>
          <UserName>Sarbasish Bose</UserName>
          <AvatarWrap><Avatar /></AvatarWrap>
          <WinBtn><MinIcon /></WinBtn>
          <WinBtn><RestoreIcon /></WinBtn>
          <WinBtn><CloseIcon /></WinBtn>
        </TitleRight>
      </TitleBar>

      <MenuBar>
        {["File", "Home", "Insert", "Page Layout", "Formulas", "Data", "Review", "View", "Help"].map(m => (
          <MenuItem key={m} $active={m === "Home"} $mr={m === "File" ? 5 : 0}>{m}</MenuItem>
        ))}
        <ShareBtn><ShareIcon />Share<ChevSlot $ml={9}><Chev c="#111" /></ChevSlot></ShareBtn>
      </MenuBar>

      <Ribbon>
        <Group $w={175}>
          <Body $pl={8}>
            <LargeBtn $w={50} $dim>
              <LargeIcon><PasteIcon /></LargeIcon>
              <LargeLine>Paste</LargeLine>
              <LargeLine><Chev c="#777" /></LargeLine>
            </LargeBtn>
            <Stack $mt={-2}>
              <SmallRow><IconSlot $w={20} $mr={2}><CutIcon /></IconSlot>Cut</SmallRow>
              <SmallRow><IconSlot $w={20} $mr={2}><CopyIcon /></IconSlot>Copy<ChevSlot $ml={12}><Chev /></ChevSlot></SmallRow>
              <SmallRow><IconSlot $w={20} $mr={2}><PainterIcon /></IconSlot>Format Painter</SmallRow>
            </Stack>
          </Body>
          <Foots label="Clipboard" launch />
        </Group>

        <Group $w={236}>
          <Body $pl={8} $pt={7}>
            <ToolRows>
              <ToolRow>
                <Select $w={122.5}>Calibri<Chev /></Select>
                <Select $w={43} $ml={3}>11<Chev /></Select>
                <Tool $w={26} $ml={2}><GrowFont up /></Tool>
                <Tool $w={26}><GrowFont /></Tool>
              </ToolRow>
              <ToolRow>
                <Tool $w={25} $bold $fs={14}>B</Tool>
                <Tool $w={25} $it $serif $fs={15}>I</Tool>
                <Tool $w={25} $under $fs={14}>U</Tool>
                <Tool $w={14}><Chev /></Tool>
                <RowSep $ml={4} />
                <Tool $w={27}><BorderIcon /></Tool>
                <Tool $w={10}><Chev /></Tool>
                <RowSep $ml={6} />
                <Tool $w={26}><FillIcon /></Tool>
                <Tool $w={12}><Chev /></Tool>
                <Tool $w={30} $ml={2}><FontColorIcon /></Tool>
                <Tool $w={6}><Chev /></Tool>
              </ToolRow>
            </ToolRows>
          </Body>
          <Foots label="Font" launch />
        </Group>

        <Group $w={294}>
          <Body $pl={6} $pt={7}>
            <ToolRows>
              <ToolRow>
                <Tool $w={26}><Lines pattern={V_TOP} /></Tool>
                <Tool $w={26}><Lines pattern={V_MID} /></Tool>
                <Tool $w={23} $ml={2} $sel><Lines pattern={V_BOT} /></Tool>
                <RowSep $ml={2} />
                <Tool $w={27}><OrientIcon /></Tool>
                <Tool $w={8}><Chev /></Tool>
              </ToolRow>
              <ToolRow>
                <Tool $w={26}><Lines pattern={H_LEFT} /></Tool>
                <Tool $w={26}><Lines pattern={H_CENTER} /></Tool>
                <Tool $w={26}><Lines pattern={H_RIGHT} /></Tool>
                <RowSep />
                <Tool $w={30}><IndentIcon /></Tool>
                <Tool $w={22}><IndentIcon right /></Tool>
              </ToolRow>
            </ToolRows>
            <TallSep $ml={8} />
            <ToolRows>
              <TextTool $pl={11}><IconSlot $w={16} $mr={3}><WrapIcon /></IconSlot>Wrap Text</TextTool>
              <TextTool $pl={9}><IconSlot $w={16} $mr={4}><MergeIcon /></IconSlot>Merge &amp; Center<ChevSlot $ml={11}><Chev /></ChevSlot></TextTool>
            </ToolRows>
          </Body>
          <Foots label="Alignment" launch />
        </Group>

        <Group $w={162}>
          <Body $pl={7.5} $pt={7}>
            <ToolRows>
              <Select $w={145.5}>General<Chev /></Select>
              <ToolRow>
                <Tool $w={24}><AcctIcon /></Tool>
                <Tool $w={12}><Chev /></Tool>
                <Tool $w={34} $fs={20}>%</Tool>
                <Tool $w={20}><CommaIcon /></Tool>
                <RowSep $ml={3} />
                <Tool $w={27}><DecIcon inc /></Tool>
                <Tool $w={25}><DecIcon /></Tool>
              </ToolRow>
            </ToolRows>
          </Body>
          <Foots label="Number" launch />
        </Group>

        <Group $w={492}>
          <Body $pl={8}>
            <LargeBtn $w={72}>
              <LargeIcon><CondIcon /></LargeIcon>
              <LargeLine>Conditional</LargeLine>
              <LargeLine>Formatting<Chev /></LargeLine>
            </LargeBtn>
            <LargeBtn $w={64}>
              <LargeIcon><TableIcon /></LargeIcon>
              <LargeLine>Format as</LargeLine>
              <LargeLine>Table<Chev /></LargeLine>
            </LargeBtn>
            <StylesSlot>
              <Gallery>
                <StyleGrid>
                  <StyleCell $bg="#fff" $fg="#000" $focus>Normal</StyleCell>
                  <StyleCell $bg="#ffc7ce" $fg="#9c0006">Bad</StyleCell>
                  <StyleCell $bg="#c6efce" $fg="#006100">Good</StyleCell>
                  <StyleCell $bg="#ffeb9c" $fg="#9c5700">Neutral</StyleCell>
                  <StyleCell $bg="#f2f2f2" $fg="#fa7d00" $bold $box>Calculation</StyleCell>
                  <StyleCell $bg="#a5a5a5" $fg="#fff" $bold $double>Check Cell</StyleCell>
                </StyleGrid>
                <GalleryScroll>
                  <GalleryBtn><Chev c="#777" up /></GalleryBtn>
                  <GalleryBtn $bright><Chev c="#ddd" /></GalleryBtn>
                  <GalleryBtn $last $bright><GalleryBar /><Chev c="#ddd" /></GalleryBtn>
                </GalleryScroll>
              </Gallery>
            </StylesSlot>
          </Body>
          <Foots label="Styles" />
        </Group>

        <Group $w={147}>
          <Body $pl={6}>
            <LargeBtn $w={44}><LargeIcon><InsertIcon /></LargeIcon><LargeLine>Insert</LargeLine><LargeLine><Chev /></LargeLine></LargeBtn>
            <LargeBtn $w={44}><LargeIcon><DeleteIcon /></LargeIcon><LargeLine>Delete</LargeLine><LargeLine><Chev /></LargeLine></LargeBtn>
            <LargeBtn $w={44}><LargeIcon><FormatIcon /></LargeIcon><LargeLine>Format</LargeLine><LargeLine><Chev /></LargeLine></LargeBtn>
          </Body>
          <Foots label="Cells" />
        </Group>

        <Group $w={207.5}>
          <Body>
            <Stack $w={107} $mt={-2}>
              <SmallRow $pl={10}><IconSlot $w={20} $mr={2}><SumIcon /></IconSlot>AutoSum<ChevSlot $ml={11}><Chev /></ChevSlot></SmallRow>
              <SmallRow $pl={10}><IconSlot $w={20} $mr={2}><FillDownIcon /></IconSlot>Fill<ChevSlot $ml={3}><Chev /></ChevSlot></SmallRow>
              <SmallRow $pl={10}><IconSlot $w={20} $mr={2}><EraserIcon /></IconSlot>Clear<ChevSlot $ml={3}><Chev /></ChevSlot></SmallRow>
            </Stack>
            <LargeBtn $w={46}><LargeIcon><SortIcon /></LargeIcon><LargeLine>Sort &amp;</LargeLine><LargeLine>Filter<Chev /></LargeLine></LargeBtn>
            <LargeBtn $w={42}><LargeIcon><FindIcon /></LargeIcon><LargeLine>Find &amp;</LargeLine><LargeLine>Select<Chev /></LargeLine></LargeBtn>
          </Body>
          <Foots label="Editing" />
        </Group>

        <Group $w={63.5}>
          <Body>
            <LargeBtn $w={62}><LargeIcon><AddinsIcon /></LargeIcon><LargeLine>Add-ins</LargeLine></LargeBtn>
          </Body>
          <Foots label="Add-ins" />
        </Group>
        <Collapse><BigChev c="#ddd" /></Collapse>
      </Ribbon>

      <FormulaBar>
        <NameBox>R11<BigChev /></NameBox>
        <Dots><S w={3} h={13} stroke="none"><circle cx="1.5" cy="2" r="1" fill="#ccc" /><circle cx="1.5" cy="7" r="1" fill="#ccc" /><circle cx="1.5" cy="12" r="1" fill="#ccc" /></S></Dots>
        <FxBox>
          <S w={12} h={12} stroke="#666"><path d="M0 0l12 12M12 0L0 12" /></S>
          <S w={15} h={12} stroke="#666"><path d="M0 6l5 5L15 0" /></S>
          <FxText>fx</FxText>
        </FxBox>
        <FormulaInput><BigChev /></FormulaInput>
      </FormulaBar>

      <SheetArea>
        <GridWrap>
          <ColHeadRow>
            <Corner><S w={12} h={12} stroke="none"><path d="M12 0v12H0z" fill="#6a6a6a" /></S></Corner>
            {letters.map(l => <ColHead key={l} $sel={l === "R"}>{l}</ColHead>)}
            <ColHead />
          </ColHeadRow>
          <Row>
            <RowHead>1</RowHead>
            {headers.map((h, i) => (
              <HeadCell key={h} $ls={i === 0 ? -0.6 : undefined}>
                <HeadText>{h}</HeadText>
                <Filter><FilterTri /></Filter>
              </HeadCell>
            ))}
            <Cell /><Cell /><Cell /><Cell />
          </Row>
          {rows.map((r, n) => (
            <Row key={r[0]}>
              <RowHead $sel={n + 2 === 11}>{n + 2}</RowHead>
              {r.map((v, i) => (
                <Cell key={i} $table $right={RIGHT.has(i)} $edge={i === 15} $ls={TIGHT[i]}>{v}</Cell>
              ))}
              <Cell /><Cell /><Cell /><Cell />
            </Row>
          ))}
          <Selection />
          <CursorMark><CrossCursor /></CursorMark>
        </GridWrap>
        <VScroll>
          <Arrow up />
          <VThumb />
          <VSpacer />
          <Arrow />
        </VScroll>
      </SheetArea>

      <TabsBar>
        <Nav $w={60.5} $pl={3.5}><NavArrow left /></Nav>
        <Nav $w={55.5} $start><NavArrow /></Nav>
        <ActiveTab>Data</ActiveTab>
        <TabSep $ml={4} />
        <SheetTab>Sheet1</SheetTab>
        <Nav $w={96}><Plus /></Nav>
        <HScrollZone>
          <VDots />
          <HTrack>
            <TriSide left />
            <HThumb />
            <HGrow />
            <TriSide />
          </HTrack>
        </HScrollZone>
      </TabsBar>

      <StatusBar>
        <ReadyText>Ready</ReadyText>
        <A11y><A11yIcon />Accessibility: Investigate</A11y>
        <StatusRight>
          <ViewBtn $w={40} $on><NormalView /></ViewBtn>
          <ViewBtn $w={40}><PageView /></ViewBtn>
          <ViewBtn $w={40} $mr={4}><BreakView /></ViewBtn>
          <ZoomSign>−</ZoomSign>
          <Slider><SliderThumb /></Slider>
          <ZoomSign>+</ZoomSign>
          <ZoomText>100%</ZoomText>
        </StatusRight>
      </StatusBar>
    </Page>
  );
}
